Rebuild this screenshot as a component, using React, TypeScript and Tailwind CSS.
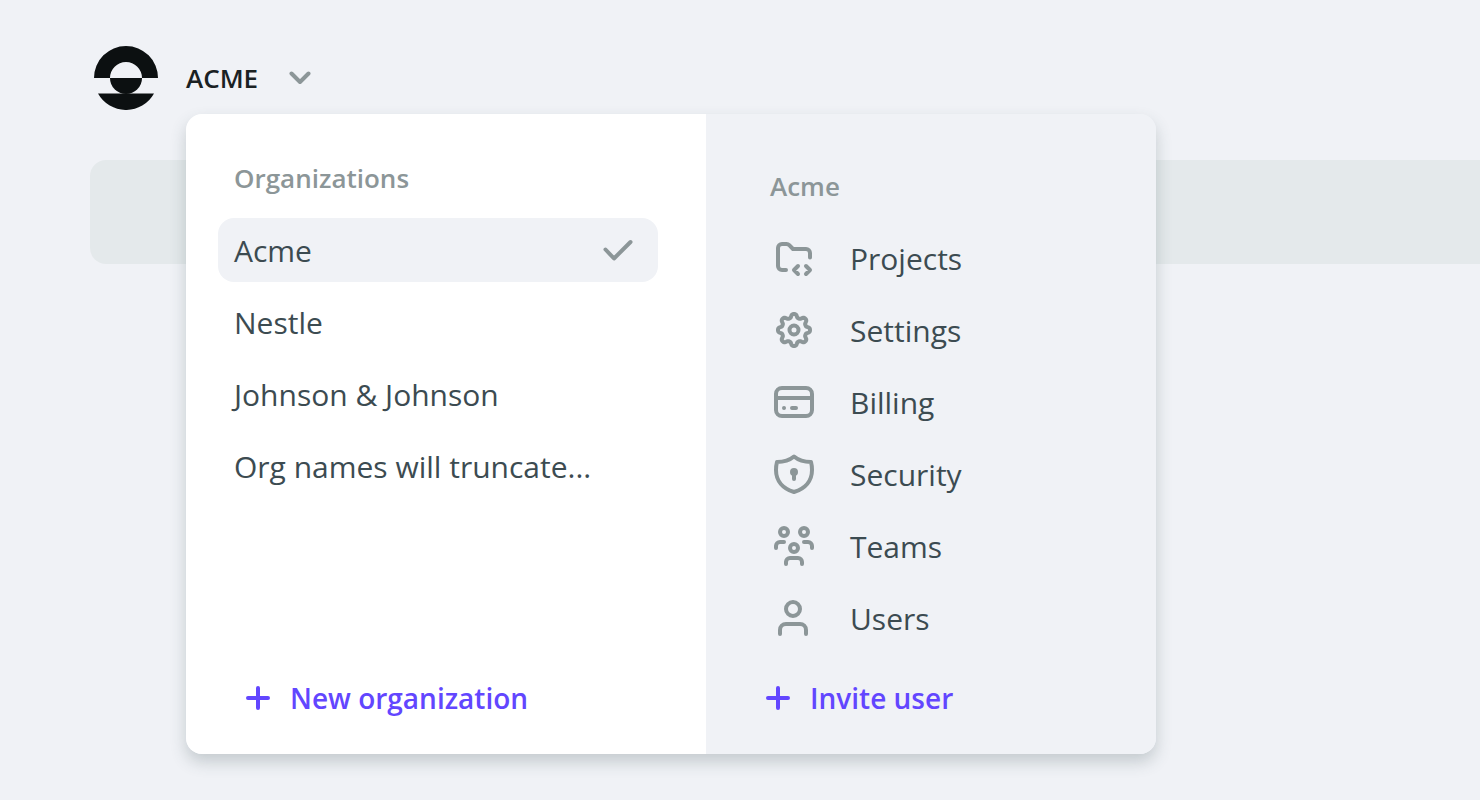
import { useState, type ReactNode } from 'react';

const organizations = ['Acme', 'Nestle', 'Johnson & Johnson', 'Org names will truncate...'];

function Icon({ children }: { children: ReactNode }) {
  return (
    <svg
      viewBox="0 0 48 48"
      fill="none"
      stroke="currentColor"
      strokeWidth="4"
      strokeLinecap="round"
      strokeLinejoin="round"
      aria-hidden="true"
      className="size-12 shrink-0 text-[#8c9698]"
    >
      {children}
    </svg>
  );
}

// Eight-tooth outline: the radius swings between tooth tip and valley.
const gearPath =
  Array.from({ length: 160 }, (_, i) => {
    const angle = (i / 160) * Math.PI * 2;
    const wave = Math.cos(angle * 8);
    const radius = 14.2 + (1.8 * Math.tanh(wave * 1.6)) / Math.tanh(1.6);
    const x = 24 + radius * Math.cos(angle);
    const y = 24 + radius * Math.sin(angle);
    return `${i === 0 ? 'M' : 'L'}${x.toFixed(2)} ${y.toFixed(2)}`;
  }).join('') + 'Z';

const menu: { label: string; icon: ReactNode }[] = [
  {
    label: 'Projects',
    icon: (
      <Icon>
        <path d="M16 36h-4a4 4 0 0 1-4-4V14a4 4 0 0 1 4-4h4.500a4 4 0 0 1 2.800 1.200L23 15h13a4 4 0 0 1 4 4v4.500" />
        <path d="M28 32l-4 4 4 4M36 32l4 4-4 4" />
      </Icon>
    ),
  },
  {
    label: 'Settings',
    icon: (
      <Icon>
        <path d={gearPath} />
        <circle cx="24" cy="24" r="4.500" />
      </Icon>
    ),
  },
  {
    label: 'Billing',
    icon: (
      <Icon>
        <rect x="6" y="10" width="36" height="28" rx="6" />
        <path d="M6 20h36M14 30h.01M22 30h4" />
      </Icon>
    ),
  },
  {
    label: 'Security',
    icon: (
      <Icon>
        <path d="M24 6.500c-4.500 3.800-10 5.500-17 5.500-.7 2.500-1 5-1 8 0 10.500 6.500 18.500 18 22 11.500-3.500 18-11.500 18-22 0-3-.3-5.500-1-8-7 0-12.500-1.700-17-5.500Z" />
        <circle cx="24" cy="22" r="2" />
        <path d="M24 23v6" />
      </Icon>
    ),
  },
  {
    label: 'Teams',
    icon: (
      <Icon>
        <circle cx="14" cy="10" r="4" />
        <circle cx="34" cy="10" r="4" />
        <circle cx="24" cy="26" r="4" />
        <path d="M6 26v-2a4 4 0 0 1 4-4h4M42 26v-2a4 4 0 0 0-4-4h-4M16 42v-2a4 4 0 0 1 4-4h8a4 4 0 0 1 4 4v2" />
      </Icon>
    ),
  },
  {
    label: 'Users',
    icon: (
      <Icon>
        <circle cx="23" cy="15" r="7" />
        <path d="M10 40v-4a6 6 0 0 1 6-6h14a6 6 0 0 1 6 6v4" />
      </Icon>
    ),
  },
];

function Logo() {
  return (
    <svg viewBox="0 0 64 64" fill="#0c1011" className="size-16 shrink-0" role="img" aria-label="Logo">
      <path d="M0 32a32 32 0 0 1 64 0H48a16 16 0 0 0-32 0Z" />
      <path d="M16 32h32a16 16 0 0 1-32 0Z" />
      <path d="M4 47.500h56a32 32 0 0 1-56 0Z" />
    </svg>
  );
}

function AddButton({ children }: { children: ReactNode }) {
  return (
    <button
      type="button"
      className="flex h-12 items-center gap-5 text-[28px] leading-[40px] font-semibold text-[#6246ff]"
    >
      <svg
        viewBox="0 0 24 24"
        stroke="currentColor"
        strokeWidth="4"
        strokeLinecap="round"
        className="size-6"
        aria-hidden="true"
      >
        <path d="M12 2v20M2 12h20" />
      </svg>
      {children}
    </button>
  );
}

export default function App() {
  const [open, setOpen] = useState(true);
  const [selected, setSelected] = useState('Acme');

  return (
    <div className="min-h-screen overflow-x-hidden bg-[#f0f2f6] font-['Open_Sans',sans-serif] text-[#3c4b51]">
      <header className="flex h-40 items-start gap-7 pt-[46px] pl-[94px]">
        <Logo />
        <div className="relative">
          <button
            type="button"
            aria-expanded={open}
            onClick={() => setOpen(!open)}
            className="flex h-16 items-center gap-[31px] text-[26px] font-semibold text-[#1a2123]"
          >
            ACME
            <svg
              viewBox="0 0 22 16"
              fill="none"
              stroke="#8c9698"
              strokeWidth="4"
              strokeLinecap="round"
              strokeLinejoin="round"
              className="h-4 w-[22px]"
              aria-hidden="true"
            >
              <path d="M2.500 3.500 11 12l8.500-8.500" />
            </svg>
          </button>

          {open && (
            <div className="absolute top-full left-0 z-10 mt-1 flex w-[970px] overflow-hidden rounded-2xl shadow-[0_8px_16px_rgba(58,80,84,0.24)]">
              <section className="flex w-[520px] flex-col bg-white pt-11 pr-12 pb-8 pl-8">
                <h2 className="px-4 text-[26px] leading-[40px] font-semibold text-[#8c9698]">
                  Organizations
                </h2>
                <ul className="mt-5 flex flex-col gap-2">
                  {organizations.map((name) => (
                    <li key={name}>
                      <button
                        type="button"
                        aria-pressed={name === selected}
                        onClick={() => setSelected(name)}
                        className={`flex h-16 w-full items-center justify-between rounded-2xl pr-6 pl-4 text-left text-[30px] ${
                          name === selected ? 'bg-[#f0f2f6]' : ''
                        }`}
                      >
                        {name}
                        {name === selected && (
                          <svg
                            viewBox="0 0 32 24"
                            fill="none"
                            stroke="#8c9698"
                            strokeWidth="4"
                            strokeLinecap="round"
                            strokeLinejoin="round"
                            className="h-6 w-8"
                            aria-hidden="true"
                          >
                            <path d="M3.500 11.500l8.500 9L28.500 4" />
                          </svg>
                        )}
                      </button>
                    </li>
                  ))}
                </ul>
                <div className="mt-auto pl-7">
                  <AddButton>New organization</AddButton>
                </div>
              </section>

              <section className="flex grow flex-col bg-[#f0f2f6] pt-[52px] pb-8 pl-[60px]">
                <h2 className="px-1 text-[26px] leading-[40px] font-semibold text-[#8c9698]">
                  {selected}
                </h2>
                <nav className="mt-5 flex flex-col gap-2 px-1">
                  {menu.map(({ label, icon }) => (
                    <a key={label} href="#" className="flex h-16 items-center gap-8 text-[30px]">
                      {icon}
                      {label}
                    </a>
                  ))}
                </nav>
                <div className="mt-6">
                  <AddButton>Invite user</AddButton>
                </div>
              </section>
            </div>
          )}
        </div>
      </header>
      <main className="pl-[90px]">
        <div className="h-[104px] rounded-l-2xl bg-[#e4e9eb]" />
      </main>
    </div>
  );
}
